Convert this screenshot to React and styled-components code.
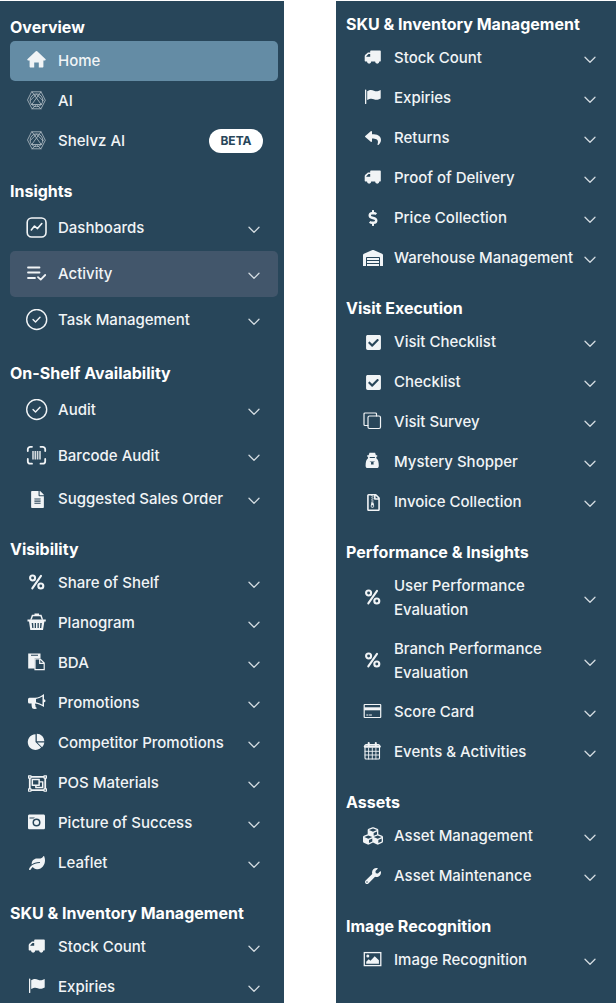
import React from "react";
import styled, { createGlobalStyle } from "styled-components";
import {
  FaCheckSquare,
  FaCubes,
  FaDollarSign,
  FaFileAlt,
  FaLeaf,
  FaRegFileArchive,
  FaRegObjectGroup,
  FaReply,
  FaWarehouse,
  FaWrench,
} from "react-icons/fa";

const Line = ({ children, width = 1.5 }) => (
  <svg
    viewBox="0 0 22 22"
    width="22"
    height="22"
    fill="none"
    stroke="currentColor"
    strokeWidth={width}
    strokeLinecap="round"
    strokeLinejoin="round"
  >
    {children}
  </svg>
);

const Solid = ({ children }) => (
  <svg viewBox="0 0 22 22" width="22" height="22" fill="currentColor">
    {children}
  </svg>
);

const HomeIcon = () => (
  <Solid>
    <path d="M9.8 1.3a1 1 0 0 1 1.4 0l8.2 7.6c.7.7.3 1.5-.6 1.5h-1.4v6.2c0 .6-.4 1-1 1h-3.6v-5.2H8.2v5.2H4.6c-.6 0-1-.4-1-1v-6.2H2.2c-.9 0-1.3-.8-.6-1.5z" />
  </Solid>
);

const AiIcon = () => (
  <Line width={0.8}>
    <g opacity="0.7">
      <path d="M6 1.8h9L19.300 10.300l-4.300 8.500H6L1.700 10.300z" />
      <circle cx="10.500" cy="10.300" r="6.400" />
      <path d="M6 1.800l9 12.400M15 1.800L6 14.200M4.500 10.300l6-6 6 6M5.500 14.500h10M6 18.800l4.500-4 4.500 4" />
    </g>
  </Line>
);

const DashboardIcon = () => (
  <Line width={1.6}>
    <rect x="1.200" y="1" width="18.800" height="19" rx="4.500" />
    <path d="M5.300 13l3.200-4 3 2.600 4.300-5" />
  </Line>
);

const ActivityIcon = () => (
  <Line width={1.8}>
    <path d="M2 4.500h11.500M2 9.500h11.500M2 15h7M12 14.200l2.700 2.400 4.500-4.600" />
  </Line>
);

const CircleCheckIcon = () => (
  <Line width={1.4}>
    <circle cx="10.700" cy="10.500" r="10" />
    <path d="M7 10.600l2.500 2.300L14 8.300" />
  </Line>
);

const BarcodeIcon = () => (
  <Line width={1.8}>
    <path d="M1.800 6V4.300a2.500 2.500 0 0 1 2.500-2.500H6M14.500 1.800h2.200a2.500 2.500 0 0 1 2.500 2.500V6M19.200 14v2.200a2.500 2.500 0 0 1-2.500 2.500h-2.200M6 18.700H4.300a2.500 2.500 0 0 1-2.500-2.500V14" />
    <path
      d="M7 6v8.500M9.300 6v8.500M11.600 6v8.500M14 6v8.500"
      strokeLinecap="butt"
      strokeWidth="1.6"
      opacity="0.85"
    />
  </Line>
);

const PercentIcon = () => (
  <Line width={2.1}>
    <circle cx="6.600" cy="6" r="2.500" />
    <circle cx="14.800" cy="14" r="2.500" />
    <path d="M15 3.800L6.300 16.300" />
  </Line>
);

const BasketIcon = () => (
  <Solid>
    <path d="M8.500 1.500h4.500v1.300h2.500l1.700 5h-1.500l-1.300-3.500H7L5.700 7.800H4.200l1.700-5h2.600z" />
    <path
      fillRule="evenodd"
      d="M1.500 7.500h18.300v2h-1.400L17 18H4.300L3 9.500H1.500zM5.700 11l.5 5h1.300l-.3-5zM8.700 11v5H10v-5zM11.500 11v5h1.300v-5zM14.300 11l-.3 5h1.300l.5-5z"
    />
  </Solid>
);

const PasteIcon = () => (
  <Solid>
    <path d="M2.200 1.500H14.500V6H8.800v10.500H2.200zM5 2.800v1h7v-1z" fillRule="evenodd" />
    <path
      d="M9 6.800h5l4.200 4.200v6.700H9zM13.700 6.800v4.500h4.500"
      fill="none"
      stroke="currentColor"
      strokeWidth="1.2"
    />
  </Solid>
);

const BullhornIcon = () => (
  <Solid>
    <path
      fillRule="evenodd"
      d="M18 2v5.200a1.500 1.500 0 0 1 0 3V15c-3-2-5.500-3.300-8.700-3.600-.8 1.200.7 2 .2 3 .1.800.8 1.200 1.500 1.700-1 1.400-3.800 1.200-4.700.2-.5-1.800-.9-3-.7-4.900H3.500A1.500 1.500 0 0 1 2 9.900V7.300a1.500 1.500 0 0 1 1.500-1.500H9c3.300-.2 6-1.500 9-3.800zM16.500 4.600A16 16 0 0 1 10 7.100v3.100a16 16 0 0 1 6.500 2.500z"
    />
  </Solid>
);

const PieIcon = () => (
  <Solid>
    <path d="M9.500 2.300V10l5.600 5.600A7.800 7.800 0 1 1 9.500 2.300z" />
    <path d="M10.800 1.700a7.600 7.600 0 0 1 7.600 7.600h-7.600z" />
    <path d="M11.300 10.500h7a7.500 7.500 0 0 1-2.200 4.700z" />
  </Solid>
);

const CameraIcon = () => (
  <Solid>
    <path
      fillRule="evenodd"
      d="M3.500 2.500h14c.8 0 1.500.6 1.500 1.400v12c0 .8-.7 1.400-1.500 1.400h-14c-.8 0-1.500-.6-1.500-1.400v-12c0-.8.700-1.400 1.500-1.400zM3.500 5.500v1h4l1.500-1zM10.500 6.500a4 4 0 1 0 0 8 4 4 0 0 0 0-8zM10.500 8a2.500 2.500 0 1 1 0 5 2.500 2.500 0 0 1 0-5z"
    />
  </Solid>
);

const TruckIcon = () => (
  <Solid>
    <path
      fillRule="evenodd"
      d="M9 3.500h9c.5 0 .8.300.8.800v9.400c0 .8-.8.900-1.500.9a2.100 2.100 0 0 1-4.200 0H9.200a2.100 2.100 0 0 1-4.200 0H3.500c-.6 0-.8-.3-.8-.8V9.200c0-.5.200-1 .6-1.400L5.400 6c.3-.3.700-.4 1.100-.4h1.700V4.300c0-.5.300-.8.800-.8zM8.200 7H6.500L4.300 9.200v.5h3.900z"
    />
  </Solid>
);

const FlagIcon = () => (
  <Solid>
    <rect x="3" y="2.500" width="1.300" height="14.500" rx="0.600" />
    <path d="M5.200 4.200c3-1.700 4.800-1.300 6.800-.4 2 .9 3.800.7 6.700-.8v8.600c-3 1.600-4.900 1.500-6.900.6-2-.9-3.800-.8-6.600.8z" />
  </Solid>
);

const CloneIcon = () => (
  <Line width={1.2}>
    <rect x="6" y="5" width="12.500" height="12.500" rx="1.500" />
    <path d="M14.500 5V3a1 1 0 0 0-1-1H3a1 1 0 0 0-1 1v10.500a1 1 0 0 0 1 1h3" />
  </Line>
);

const ShopperIcon = () => (
  <Solid>
    <path
      fillRule="evenodd"
      d="M7.500 1.800h5.600l.8 2.500h1.300v1.500h-1l.3 1.700c1.600.9 2.300 3.500 2.300 7.200 0 1.400-.7 2.300-2 2.300H5.600c-1.300 0-2-.9-2-2.300 0-3.700.7-6.300 2.300-7.200l.3-1.700h-1V4.300h1.400zM7.700 6v.9h5.200V6zM7.500 10l1.700 1.500-.3 2h2.800l-.3-2L13.100 10l-1.400.6H8.900z"
    />
  </Solid>
);

const CardIcon = () => (
  <Line width={1.2}>
    <rect x="2.200" y="3.500" width="16.500" height="13" rx="0.500" />
    <path d="M2.200 7.800h16.500" strokeWidth="3" strokeLinecap="butt" />
    <path d="M4.700 14h1.300M7.500 14h2" strokeWidth="1" />
  </Line>
);

const CalendarIcon = () => (
  <Line width={1.1}>
    <rect x="3" y="3.500" width="14.500" height="14.500" rx="1" />
    <path d="M3 5.500h14.500" strokeWidth="2.500" />
    <path
      d="M3 10.300h14.500M3 14h14.500M6.600 7v11M10.300 7v11M13.900 7v11"
      strokeWidth="0.9"
    />
    <path d="M6.700 2v2.500M13.800 2v2.500" strokeWidth="2" />
  </Line>
);

const PictureIcon = () => (
  <Solid>
    <rect
      x="2.300"
      y="3.600"
      width="16.500"
      height="13"
      fill="none"
      stroke="currentColor"
      strokeWidth="1.3"
    />
    <circle cx="5.800" cy="7" r="1.500" />
    <path d="M4.200 14.800v-2l2.500-2.500 1.800 1.500 4.200-4.500 4.200 4v3.500z" />
  </Solid>
);

const Chevron = () => (
  <svg width="12" height="8" viewBox="0 0 12 8" fill="none" stroke="currentColor" strokeWidth="1.3">
    <path d="M1 1.300l5 5 5-5" strokeLinecap="round" strokeLinejoin="round" />
  </svg>
);

const leftSections = [
  {
    title: "Overview",
    items: [
      { label: "Home", icon: <HomeIcon />, link: true, tone: "#648ca5" },
      { label: "AI", icon: <AiIcon />, link: true },
      { label: "Shelvz AI", icon: <AiIcon />, link: true, badge: "BETA" },
    ],
  },
  {
    title: "Insights",
    items: [
      { label: "Dashboards", icon: <DashboardIcon />, height: 46 },
      { label: "Activity", icon: <ActivityIcon />, height: 46, tone: "#42566b" },
      { label: "Task Management", icon: <CircleCheckIcon />, height: 46 },
    ],
  },
  {
    title: "On-Shelf Availability",
    items: [
      { label: "Audit", icon: <CircleCheckIcon />, height: 46 },
      { label: "Barcode Audit", icon: <BarcodeIcon />, height: 46 },
      { label: "Suggested Sales Order", icon: <FaFileAlt size={17} /> },
    ],
  },
  {
    title: "Visibility",
    items: [
      { label: "Share of Shelf", icon: <PercentIcon /> },
      { label: "Planogram", icon: <BasketIcon /> },
      { label: "BDA", icon: <PasteIcon /> },
      { label: "Promotions", icon: <BullhornIcon /> },
      { label: "Competitor Promotions", icon: <PieIcon /> },
      { label: "POS Materials", icon: <FaRegObjectGroup size={19} /> },
      { label: "Picture of Success", icon: <CameraIcon /> },
      { label: "Leaflet", icon: <FaLeaf size={16} /> },
    ],
  },
  {
    title: "SKU & Inventory Management",
    items: [
      { label: "Stock Count", icon: <TruckIcon /> },
      { label: "Expiries", icon: <FlagIcon /> },
    ],
  },
];

const rightSections = [
  {
    title: "SKU & Inventory Management",
    items: [
      { label: "Stock Count", icon: <TruckIcon /> },
      { label: "Expiries", icon: <FlagIcon /> },
      { label: "Returns", icon: <FaReply size={16} /> },
      { label: "Proof of Delivery", icon: <TruckIcon /> },
      { label: "Price Collection", icon: <FaDollarSign size={16} /> },
      { label: "Warehouse Management", icon: <FaWarehouse size={20} /> },
    ],
  },
  {
    title: "Visit Execution",
    items: [
      { label: "Visit Checklist", icon: <FaCheckSquare size={17} /> },
      { label: "Checklist", icon: <FaCheckSquare size={17} /> },
      { label: "Visit Survey", icon: <CloneIcon /> },
      { label: "Mystery Shopper", icon: <ShopperIcon /> },
      { label: "Invoice Collection", icon: <FaRegFileArchive size={17} /> },
    ],
  },
  {
    title: "Performance & Insights",
    items: [
      { label: "User Performance Evaluation", icon: <PercentIcon />, wrap: true, height: 63 },
      { label: "Branch Performance Evaluation", icon: <PercentIcon />, wrap: true, height: 63 },
      { label: "Score Card", icon: <CardIcon /> },
      { label: "Events & Activities", icon: <CalendarIcon /> },
    ],
  },
  {
    title: "Assets",
    items: [
      { label: "Asset Management", icon: <FaCubes size={20} /> },
      { label: "Asset Maintenance", icon: <FaWrench size={16} /> },
    ],
  },
  {
    title: "Image Recognition",
    items: [{ label: "Image Recognition", icon: <PictureIcon /> }],
  },
];

function MenuItem({ item }) {
  return (
    <Item
      as={item.link ? "a" : "button"}
      href={item.link ? "#" : undefined}
      $tone={item.tone}
      $height={item.height}
    >
      <IconBox>{item.icon}</IconBox>
      <Label $wrap={item.wrap}>{item.label}</Label>
      {item.badge && <Badge>{item.badge}</Badge>}
      {!item.link && (
        <Arrow>
          <Chevron />
        </Arrow>
      )}
    </Item>
  );
}

function Menu({ sections }) {
  return sections.map((section) => (
    <Section key={section.title}>
      <Title>{section.title}</Title>
      {section.items.map((item) => (
        <MenuItem key={item.label} item={item} />
      ))}
    </Section>
  ));
}

export default function App() {
  return (
    <>
      <GlobalStyle />
      <Page>
        <Sidebar $top={13} $right={6}>
          <Menu sections={leftSections} />
        </Sidebar>
        <Sidebar $top={10} $right={2}>
          <Menu sections={rightSections} />
        </Sidebar>
      </Page>
    </>
  );
}

const GlobalStyle = createGlobalStyle`
  * {
    box-sizing: border-box;
  }
  body {
    margin: 0;
    background: #fff;
    font-family: Inter, "Liberation Sans", sans-serif;
  }
`;
const Page = styled.div`
  display: grid;
  grid-template-columns: 71fr 70fr;
  gap: 52px;
  height: 100vh;
  padding: 1px 0;
`;
const Sidebar = styled.nav`
  display: flex;
  flex-direction: column;
  gap: 17px;
  min-width: 0;
  min-height: 0;
  overflow: hidden;
  padding: ${(props) => props.$top}px ${(props) => props.$right}px 0 10px;
  background: #28465a;
  color: #fff;
`;
const Section = styled.section`
  display: flex;
  flex-direction: column;
  flex-shrink: 0;
`;
const Title = styled.h2`
  margin: 0;
  font-size: 16px;
  font-weight: 700;
  line-height: 27px;
  white-space: nowrap;
`;
const Item = styled.button`
  display: flex;
  align-items: center;
  gap: 10px;
  width: 100%;
  height: ${(props) => props.$height || 40}px;
  padding: 0 15px 0 16px;
  border: 0;
  border-radius: 5px;
  background: ${(props) => props.$tone || "transparent"};
  color: #f1f4f6;
  font: inherit;
  text-align: left;
  text-decoration: none;
  cursor: pointer;
`;
const IconBox = styled.span`
  display: flex;
  align-items: center;
  justify-content: center;
  flex: 0 0 22px;
`;
const Label = styled.span`
  flex: 1;
  font-size: 15px;
  font-weight: 500;
  line-height: 24px;
  max-width: ${(props) => (props.$wrap ? "160px" : "none")};
  white-space: ${(props) => (props.$wrap ? "normal" : "nowrap")};
`;
const Badge = styled.span`
  width: 54px;
  border-radius: 12px;
  background: #fff;
  color: #28465a;
  font-size: 12px;
  font-weight: 700;
  line-height: 24px;
  text-align: center;
`;
const Arrow = styled.span`
  display: flex;
  flex-shrink: 0;
  margin-left: auto;
  padding: 4px 3px 0 0;
  color: #d3dbe0;
`;
